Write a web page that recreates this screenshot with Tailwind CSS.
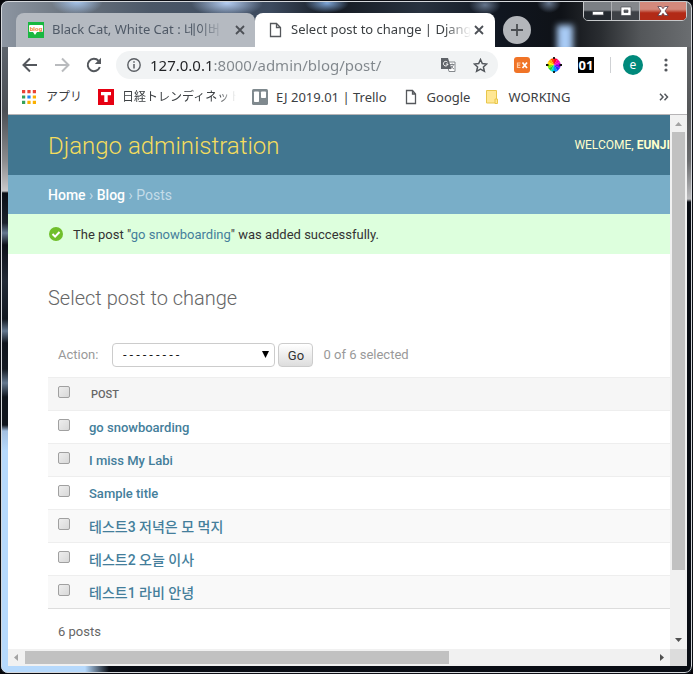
<!DOCTYPE html>
<html lang="en">
<head>
<meta charset="utf-8">
<meta name="viewport" content="width=device-width, initial-scale=1">
<title>Select post to change | Django site admin</title>
<script src="https://cdn.jsdelivr.net/npm/@tailwindcss/browser@4"></script>
</head>
<body class="bg-[#05060a] font-['Roboto','Noto_Sans_CJK_KR',sans-serif] text-[13px] leading-5 text-[#333]">
<div class="relative flex h-screen flex-col overflow-hidden rounded-lg border border-[#0c0e14] bg-[linear-gradient(180deg,#6a727c_0px,#4b4f55_110px,#8c8c8e_160px,#c4c4c6_188px,#c8c8ca_190px,#0b0f16_192px,#1b222c_222px,#64788f_232px,#0c1017_244px,#222a36_280px,#121820_318px,#64788f_330px,#10151d_342px,#141a22_368px,#64788f_382px,#10151d_396px,#10151d_424px,#a3bfe0_430px,#b6d9fc_450px,#b6d9fc_100%)] pb-[7px] pl-[7px] pr-[5px]">
  <!-- right and bottom glass edges -->
  <div class="absolute inset-y-0 right-0 w-[5px] bg-[linear-gradient(180deg,#6b6e71_0px,#555759_110px,#6b6c6e_160px,#bcbcbe_198px,#090d14_201px)]"></div>
  <div class="absolute bottom-0 left-[84px] right-0 h-[7px] bg-[linear-gradient(90deg,#b6d9fc00_0px,#090d14_24px)]"></div>
  <div class="absolute inset-x-0 top-0 h-[46px] overflow-hidden bg-[radial-gradient(ellipse_26px_14px_at_76px_0px,#a9c8f0,transparent),radial-gradient(ellipse_36px_14px_at_226px_2px,#b4cdf2,transparent),radial-gradient(ellipse_22px_10px_at_326px_2px,#7ea6d8,transparent),radial-gradient(ellipse_16px_10px_at_484px_4px,#65758c,transparent),radial-gradient(ellipse_12px_10px_at_548px_2px,#65758c,transparent),linear-gradient(90deg,#8d96a2_0px,#6f7883_60px,#4b5767_150px,#3c4a5e_270px,#151a22_330px,#28323f_420px,#101620_500px,#0f1217_560px,#2a2d31_600px,#54575a_640px,#6b6e71_100%)]">
    <div class="absolute left-[556px] top-6 h-7 w-4 bg-[#a9cbf5] blur-[3px]"></div>
  </div>
  <div class="pointer-events-none absolute inset-0 rounded-[7px] border border-[#d5d8dc]"></div>

  <!-- tab strip -->
  <header class="relative flex h-[46px] shrink-0 items-end pl-2">
    <nav aria-label="Tabs" class="flex items-end font-['Noto_Sans','Noto_Sans_CJK_KR',sans-serif] text-[13px]">
      <div class="flex h-[34px] w-[239px] items-center rounded-t-lg bg-[#b5bac1] pl-3 pr-[7px]">
        <svg class="mr-2 size-4 shrink-0" viewBox="0 0 16 16" aria-hidden="true"><rect width="16" height="16" fill="#19b840"/><path d="M2 3h12q1 0 1 1v5q0 1-1 1H9l-2 3-2-3H2Q1 10 1 9V4q0-1 1-1z" fill="#fff"/><text x="8" y="8.600" font-size="6" font-weight="bold" text-anchor="middle" fill="#f07a22" font-family="Liberation Sans">blog</text></svg>
        <a href="#" class="flex-1 overflow-hidden whitespace-nowrap pb-[2px] text-[#4f5966] [mask-image:linear-gradient(90deg,#000_85%,transparent)]">Black Cat, White Cat : 네이버</a>
        <button aria-label="Close tab" class="ml-2 flex size-4 items-center justify-center"><svg class="size-[10px]" viewBox="0 0 10 10"><path d="M1 1l8 8M9 1l-8 8" stroke="#4c5056" stroke-width="1.800"/></svg></button>
      </div>
      <div class="flex h-[34px] w-[240px] items-center rounded-t-lg bg-white pl-3 pr-2">
        <svg class="mr-2 size-4 shrink-0" viewBox="0 0 16 16" aria-hidden="true"><path d="M3.500 1.500h6l4 4v9h-10zM9.500 1.500v4h4" fill="none" stroke="#55585c" stroke-width="1.300"/></svg>
        <a href="#" class="flex-1 overflow-hidden whitespace-nowrap pb-[2px] text-[#3c4043] [mask-image:linear-gradient(90deg,#000_85%,transparent)]">Select post to change | Djang</a>
        <button aria-label="Close tab" class="flex size-4 items-center justify-center"><svg class="size-[10px]" viewBox="0 0 10 10"><path d="M1 1l8 8M9 1l-8 8" stroke="#4c5056" stroke-width="1.800"/></svg></button>
      </div>
      <button aria-label="New tab" class="mb-[3px] ml-2 flex size-7 items-center justify-center rounded-full bg-[#b3b6bb]"><svg class="size-3" viewBox="0 0 12 12"><path d="M6 0v12M0 6h12" stroke="#4a4d52" stroke-width="1.800"/></svg></button>
    </nav>
    <div class="absolute right-0 top-0 flex h-5 overflow-hidden rounded-b-[5px] border border-[#c6c8ca] bg-[#2c3036]">
      <button aria-label="Minimize" class="flex w-7 items-center justify-center border-r border-[#aeb0b3] bg-linear-to-b from-[#7b7f84] from-45% to-[#24292f] to-55%"><svg class="h-3 w-3" viewBox="0 0 12 12"><rect x=".5" y="6.500" width="11" height="3.500" fill="#fff" stroke="#484c52" stroke-width=".7"/></svg></button>
      <button aria-label="Maximize" class="flex w-7 items-center justify-center border-r border-[#aeb0b3] bg-linear-to-b from-[#85888c] from-45% to-[#3e4247] to-55%"><svg class="h-3 w-3" viewBox="0 0 12 12"><path d="M1 2h10v8.500H1zM4 5v2.500h4V5z" fill="#fff" fill-rule="evenodd" stroke="#484c52" stroke-width=".7"/></svg></button>
      <button aria-label="Close" class="flex w-[46px] items-center justify-center bg-linear-to-b from-[#d3897c] from-40% to-[#b22a16] to-60%"><svg class="h-3 w-3" viewBox="0 0 12 12"><path d="M.8 1.500h3.500L6 3.700l1.700-2.200h3.500L8 6l3.200 4.500H7.700L6 8.300l-1.700 2.200H.8L4 6z" fill="#fff" stroke="#5b4250" stroke-width=".8"/></svg></button>
    </div>
  </header>

  <!-- toolbar -->
  <div class="relative flex h-9 shrink-0 items-center bg-white pl-[14px] pr-[19px]">
    <button aria-label="Back" class="mr-4 size-4"><svg viewBox="0 0 16 16"><path d="M15 8H2M8 1.500L1.500 8 8 14.500" fill="none" stroke="#54585d" stroke-width="2"/></svg></button>
    <button aria-label="Forward" class="mr-4 size-4"><svg viewBox="0 0 16 16"><path d="M1 8h13M8 1.500L14.500 8 8 14.500" fill="none" stroke="#b9bbbe" stroke-width="2"/></svg></button>
    <button aria-label="Reload" class="mr-[14px] size-4"><svg viewBox="0 0 16 16"><path d="M13.800 10A6.200 6.200 0 1 1 12.600 3.800" fill="none" stroke="#54585d" stroke-width="2"/><path d="M15 .8v6.200H8.800z" fill="#54585d"/></svg></button>
    <div class="flex h-7 min-w-0 flex-1 items-center rounded-full bg-[#f1f3f4] pl-[11px] pr-[10px]">
      <svg class="mr-[9px] size-[14px] shrink-0" viewBox="0 0 14 14" aria-hidden="true"><circle cx="7" cy="7" r="6.200" fill="none" stroke="#5a5e63" stroke-width="1.400"/><path d="M7 6v4.500M7 3.300v1.500" stroke="#5a5e63" stroke-width="1.500"/></svg>
      <input aria-label="Address" value="127.0.0.1:8000/admin/blog/post/" class="min-w-0 flex-1 bg-[linear-gradient(90deg,#202124_64px,#80868b_64px)] bg-clip-text font-['Noto_Sans',sans-serif] text-[15px] leading-5 text-transparent caret-black outline-none">
      <button aria-label="Translate" class="mr-[17px] h-[14px] w-[15px]"><svg viewBox="0 0 15 14"><path d="M5.500 4h8.500v9.500H8z" fill="#fff" stroke="#85898d"/><path d="M0 0h7l3.500 11H0z" fill="#5f6368"/><path d="M6.500 4.200A2.300 2.300 0 1 0 7 6H4.800" fill="none" stroke="#fff"/><path d="M9 6.500h4.500M11.200 5.500v1M12.500 6.500c-.5 2-2 3.500-3 4.300M9.800 7.500c.7 1.500 1.700 2.700 3.200 3.500" fill="none" stroke="#777b80" stroke-width=".9"/></svg></button>
      <button aria-label="Bookmark this page" class="size-[15px]"><svg viewBox="0 0 15 15"><path d="M7.500 1.500l1.800 4 4.400.5-3.300 2.900 1 4.400-3.900-2.300-3.900 2.300 1-4.400L1.300 6l4.400-.5z" fill="none" stroke="#54585d" stroke-width="1.500"/></svg></button>
    </div>
    <button aria-label="EX extension" class="ml-4 h-4 w-4 rounded-[3px] bg-[#f07427]"><svg viewBox="0 0 16 16"><path d="M6.500 6H3.500v4.500h3M3.500 8.200h2.700" fill="none" stroke="#ffc9a0" stroke-width="1.200"/><path d="M8.500 5.500l4.500 5.500M13 5.500L8.500 11" stroke="#fff" stroke-width="1.700"/></svg></button>
    <button aria-label="Colour picker" class="ml-4 h-4 w-4"><svg viewBox="0 0 16 16"><path d="M8 8V1l3.500 1z" fill="#f03"/><path d="M8 8V1L4.500 2z" fill="#ff4a00"/><path d="M8 8L4.500 2 2 5z" fill="#ffb000"/><path d="M8 8L2 5 1 8z" fill="#ffe800"/><path d="M8 8H1l1.500 3.500z" fill="#8df000"/><path d="M8 8l-5.500 3.500L5 14z" fill="#1bd03a"/><path d="M8 8l-3 6 3 1.500z" fill="#00d8d0"/><path d="M8 8v7.500l3.500-1.500z" fill="#0090ff"/><path d="M8 8l3.500 6 2.500-3z" fill="#2030ff"/><path d="M8 8l6 3 1-3z" fill="#7a00f0"/><path d="M8 8h7l-1-3z" fill="#d000e8"/><path d="M8 8l6-3-2.500-3z" fill="#ff00a0"/><path d="M8 0v2M8 14v2M0 8h2.500M13.500 8H16" stroke="#111" stroke-width="1.800"/></svg></button>
    <button aria-label="01 extension" class="ml-4 h-4 w-4 bg-black text-center font-['Noto_Sans'] text-[13px] font-bold leading-[14px] text-white">01</button>
    <span class="ml-4 h-4 w-px bg-[#cfd1d4]"></span>
    <button aria-label="Profile" class="ml-3 size-5 rounded-full bg-[#00897b] text-center font-['Noto_Sans'] text-[12px] leading-[18px] text-white">e</button>
    <button aria-label="Menu" class="ml-[21px] h-4 w-1"><svg viewBox="0 0 4 16"><circle cx="2" cy="3" r="1.600" fill="#54585d"/><circle cx="2" cy="8" r="1.600" fill="#54585d"/><circle cx="2" cy="13" r="1.600" fill="#54585d"/></svg></button>
  </div>

  <!-- bookmarks -->
  <nav aria-label="Bookmarks" class="relative flex h-8 shrink-0 items-center border-b border-[#b6b4b6] bg-white pb-[3px] pl-[14px] pr-[18px] font-['Noto_Sans','Noto_Sans_CJK_JP',sans-serif] text-[13px] text-[#3c4043]">
    <a href="#" class="flex items-center gap-[10px] whitespace-nowrap text-[12px]"><svg class="size-[14px]" viewBox="0 0 13 13"><path d="M0 0h3v3H0zM5 0h3v3H5zM10 0h3v3h-3z" fill="#ea4335"/><path d="M0 5h3v3H0zM0 10h3v3H0z" fill="#34a05a"/><path d="M5 5h3v3H5z" fill="#1f88f5"/><path d="M10 5h3v3h-3zM5 10h3v3H5zM10 10h3v3h-3z" fill="#fbb000"/></svg>アプリ</a>
    <a href="#" class="ml-4 flex w-[138px] items-center gap-2 whitespace-nowrap text-[12px]"><svg class="size-4 shrink-0" viewBox="0 0 16 16"><path fill="#e60012" d="M0 0h16v16H0z"/><path d="M3 3h10v3.200H9.700V13H6.300V6.200H3z" fill="#fff"/></svg><span class="overflow-hidden [mask-image:linear-gradient(90deg,#000_85%,transparent)]">日経トレンディネット</span></a>
    <a href="#" class="ml-4 flex items-center gap-2 whitespace-nowrap"><svg class="size-4" viewBox="0 0 16 16"><rect width="16" height="16" rx="1.500" fill="#7f898e"/><rect x="2" y="2.500" width="5" height="10.500" rx=".8" fill="#fff"/><rect x="9" y="2.500" width="5" height="6.500" rx=".8" fill="#fff"/></svg>EJ 2019.01 | Trello</a>
    <a href="#" class="ml-4 flex items-center gap-2 whitespace-nowrap"><svg class="size-4" viewBox="0 0 16 16"><path d="M3.500 1.500h6l3 3.500v9.500h-9zM9.500 1.500V5h3" fill="none" stroke="#55585c" stroke-width="1.300"/></svg>Google</a>
    <a href="#" class="ml-[14px] flex items-center gap-2 whitespace-nowrap"><svg class="size-4" viewBox="0 0 16 16"><path d="M2.500 1.500h10v12.500h-10z" fill="#ffe793" stroke="#e8c64b"/><path d="M11 10h2.500v4.500H11z" fill="#ffe793" stroke="#e8c64b"/></svg>WORKING</a>
    <button aria-label="More bookmarks" class="ml-auto h-2 w-[10px]"><svg viewBox="0 0 10 8"><path d="M1 .8L4 4 1 7.200M5.500.8l3 3.200-3 3.200" fill="none" stroke="#54585d" stroke-width="1.500"/></svg></button>
  </nav>

  <!-- page with its scroll bars -->
  <div class="relative grid min-h-0 flex-1 grid-cols-[minmax(0,1fr)_17px] grid-rows-[minmax(0,1fr)_17px] bg-white">
    <div class="overflow-hidden">
      <div class="flex h-[60px] items-center justify-between bg-[#417690] pl-10">
        <h1 class="whitespace-nowrap pt-px text-[24px] font-light text-[#f5dd5d]">Django administration</h1>
        <div class="whitespace-nowrap text-[12px] text-[#ffc]">WELCOME, <strong class="font-bold">EUNJI</strong></div>
      </div>
      <nav aria-label="Breadcrumbs" class="bg-[#79aec8] pb-[9px] pl-10 pt-[11px] text-[14px] leading-[19px] text-[#c4dce8]"><a href="#" class="font-medium text-white">Home</a> › <a href="#" class="font-medium text-white">Blog</a> › Posts</nav>
      <p class="flex items-center gap-[10px] bg-[#dfd] py-[10px] pl-[41px]"><svg class="size-[14px]" viewBox="0 0 14 14" aria-hidden="true"><circle cx="7" cy="7" r="7" fill="#70bf2b"/><path d="M3.500 7l2.600 2.600 4.400-4.600" fill="none" stroke="#fff" stroke-width="2"/></svg><span class="pt-px leading-[19px]">The post "<a href="#" class="text-[#447e9b]">go snowboarding</a>" was added successfully.</span></p>
      <main class="pl-10 pt-8">
        <h2 class="text-[20px] font-light leading-6 text-[#666]">Select post to change</h2>
        <form>
          <div class="mb-[10px] mt-[33px] flex h-6 items-center pl-[10px] text-[#999]">
            <label for="action">Action:</label>
            <div class="relative ml-[14px] h-6 w-[163px]">
              <select id="action" class="h-6 w-full appearance-none rounded border border-[#ccc] bg-white pl-2 font-['Liberation_Mono'] text-[11px] leading-5 text-black"><option>---------</option></select>
              <svg class="pointer-events-none absolute right-[6px] top-2 h-[7px] w-[7px]" viewBox="0 0 7 7"><path d="M0 0h7L3.500 7z" fill="#000"/></svg>
            </div>
            <button type="button" class="ml-[3px] h-6 w-[35px] rounded border border-[#ccc] bg-linear-to-b from-white to-[#ddd] pt-px text-[#333]">Go</button>
            <span class="ml-[10px]">0 of 6 selected</span>
          </div>
          <table class="w-full border-collapse border-b border-[#ddd] text-left">
            <thead><tr class="h-[33px] border-t border-[#eee] bg-[#f6f6f6]">
              <th class="w-[41px] pl-[10px] align-top"><input type="checkbox" aria-label="Select all" class="mt-2 block size-3 appearance-none rounded-[2px] border border-[#a0a0a0] bg-linear-to-br from-[#eee] to-[#d8d8d8]"></th>
              <th class="pl-[2px] pt-[2px] text-[11px] font-medium text-[#666]">POST</th></tr></thead>
            <tbody class="font-medium text-[#447e9b] [&_td]:p-0 [&_td]:pt-[2px] [&_input]:ml-[10px] [&_input]:mt-[6px] [&_input]:block [&_input]:size-3 [&_input]:appearance-none [&_input]:rounded-[2px] [&_input]:border [&_input]:border-[#a0a0a0] [&_input]:bg-linear-to-br [&_input]:from-[#eee] [&_input]:to-[#d8d8d8] [&_td:first-child]:align-top [&_tr]:h-[33px] [&_tr]:border-t [&_tr]:border-[#eee] [&_tr:nth-child(even)]:bg-[#f9f9f9]">
              <tr><td><input type="checkbox" aria-label="go snowboarding"></td><td><a href="#">go snowboarding</a></td></tr>
              <tr><td><input type="checkbox" aria-label="I miss My Labi"></td><td><a href="#">I miss My Labi</a></td></tr>
              <tr><td><input type="checkbox" aria-label="Sample title"></td><td><a href="#">Sample title</a></td></tr>
              <tr><td><input type="checkbox" aria-label="테스트3"></td><td class="text-[14px]"><a href="#">테스트3 저녁은 모 먹지</a></td></tr>
              <tr><td><input type="checkbox" aria-label="테스트2"></td><td class="text-[14px]"><a href="#">테스트2 오늘 이사</a></td></tr>
              <tr><td><input type="checkbox" aria-label="테스트1"></td><td class="text-[14px]"><a href="#">테스트1 라비 안녕</a></td></tr>
            </tbody>
          </table>
          <p class="pl-[10px] pt-[13px] text-[#666]">6 posts</p>
        </form>
      </main>
    </div>
    <div class="flex flex-col items-center bg-[#f1f1f1]">
      <svg class="h-[17px] w-[7px] shrink-0" viewBox="0 0 7 17"><path d="M0 11h7L3.500 7z" fill="#a3a3a3"/></svg>
      <div class="h-[82%] w-[13px] bg-[#c1c1c1]"></div>
      <svg class="mt-auto h-[17px] w-[7px] shrink-0" viewBox="0 0 7 17"><path d="M0 6h7L3.500 10z" fill="#505050"/></svg>
    </div>
    <div class="flex items-center bg-[#f1f1f1]">
      <svg class="h-[7px] w-[17px] shrink-0" viewBox="0 0 17 7"><path d="M10 0v7L6 3.500z" fill="#a3a3a3"/></svg>
      <div class="h-[13px] w-[64%] bg-[#c1c1c1]"></div>
      <svg class="ml-auto h-[7px] w-[17px] shrink-0" viewBox="0 0 17 7"><path d="M7 0v7l4-3.500z" fill="#505050"/></svg>
    </div>
    <div class="bg-[#dcdcdc]"></div>
  </div>
</div>
</body>
</html>
